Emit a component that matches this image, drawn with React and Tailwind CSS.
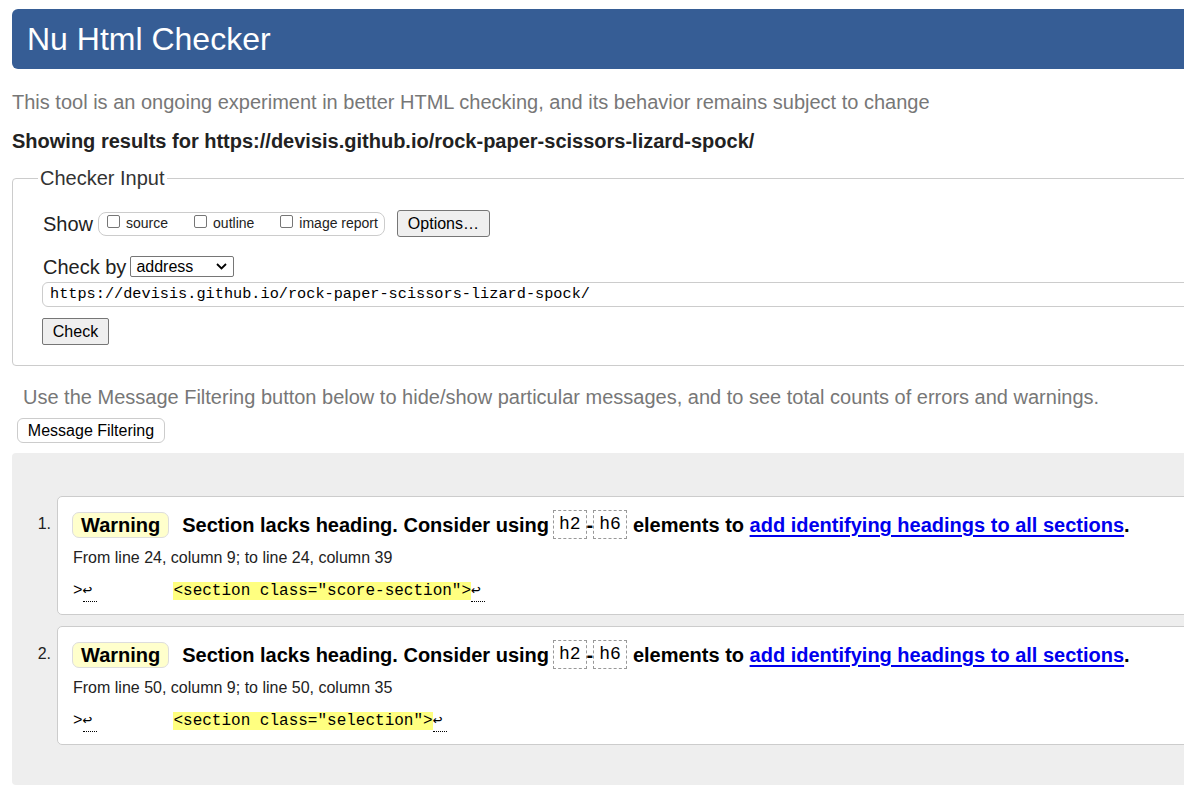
import React from 'react';

const SANS = 'font-["Liberation_Sans",Arial,sans-serif]';
const MONO = 'font-["Liberation_Mono","DejaVu_Sans_Mono",monospace]';

const messages = [
  { n: 1, from: 'From line 24, column 9; to line 24, column 39', code: '<section class="score-section">' },
  { n: 2, from: 'From line 50, column 9; to line 50, column 35', code: '<section class="selection">' },
];

function Box() {
  return <span className="inline-block w-[13px] h-[13px] border border-[#767676] rounded-[2px] bg-white mr-[6px] translate-y-[-2px]"></span>;
}

function Tag({ children }) {
  return (
    <code className={`${MONO} inline-flex items-center h-[29px] px-[5px] border border-dashed border-[#999] font-normal text-[18px]`}>
      {children}
    </code>
  );
}

function Message({ m }) {
  return (
    <li className="flex">
      <span className="w-[45px] shrink-0 text-right pr-[6px] pt-[15px] text-[16px] leading-[26px] text-[#222]">{m.n}.</span>
      <div className="w-[1200px] bg-white border border-[#ccc] rounded-[5px] pl-[15px] pt-[13px] pb-[12px]">
        <div className="flex items-center h-[29px] text-[20px] font-bold text-black whitespace-nowrap">
          <span className="inline-flex items-center h-[26px] px-[8px] bg-[#ffffcc] border border-[#ddd] rounded-[7px] mr-[13px] -ml-[1px]">Warning</span>
          <span className="mr-[4px]">Section lacks heading. Consider using</span>
          <Tag>h2</Tag>
          <span>-</span>
          <Tag>h6</Tag>
          <span className="ml-[6px]">elements to&nbsp;</span>
          <a className="text-[#0000ee] underline underline-offset-[3px]" href="#">add identifying headings to all sections</a>
          <span>.</span>
        </div>
        <p className="mt-[9px] text-[16px] leading-[20px] text-[#222]">{m.from}</p>
        <p className={`${MONO} mt-[13px] text-[16px] leading-[21px] text-black whitespace-pre`}>
          <span>&gt;</span>
          <span className="inline-block w-[14px] border-b border-dotted border-black leading-[19px]">↩</span>
          <span>{'        '}</span>
          <span className="bg-[#ffff80]">{m.code}</span>
          <span className="inline-block w-[14px] border-b border-dotted border-black leading-[19px]">↩</span>
        </p>
      </div>
    </li>
  );
}

export default function App() {
  return (
    <div className={`${SANS} w-full h-[796px] overflow-hidden bg-white text-[#222]`}>
      <div className="w-[1400px] pl-[12px]">
        <header className="mt-[9px] h-[60px] bg-[#365d95] rounded-[6px] pl-[15px] flex items-center">
          <h1 className="text-[32px] text-white leading-none">Nu Html Checker</h1>
        </header>

        <p className="mt-[22px] text-[20px] leading-[23px] text-[#777]">
          This tool is an ongoing experiment in better HTML checking, and its behavior remains subject to change
        </p>
        <p className="mt-[16px] text-[20px] leading-[23px] font-bold text-[#222]">
          Showing results for https://devisis.github.io/rock-paper-scissors-lizard-spock/
        </p>

        <fieldset className="mt-[14px] border border-[#ccc] rounded-[4px] pl-[30px] pb-[20px]">
          <legend className="-ml-[5px] px-[2px] text-[20px] leading-[23px] text-[#333]">Checker Input</legend>

          <div className="mt-[20px] flex items-center h-[27px]">
            <span className="text-[20px] text-[#222]">Show</span>
            <div className="ml-[5px] flex items-center h-[24px] border border-[#ccc] rounded-[8px] pl-[8px] pr-[6px] text-[14px] text-[#222]">
              <label className="flex items-center mr-[26px]"><Box />source</label>
              <label className="flex items-center mr-[26px]"><Box />outline</label>
              <label className="flex items-center"><Box />image report</label>
            </div>
            <button className="ml-[12px] h-[27px] w-[93px] bg-[#efefef] border border-[#767676] rounded-[3px] text-[16px] text-black">Options…</button>
          </div>

          <div className="mt-[18px] flex items-center h-[23px]">
            <span className="text-[20px] text-[#222]">Check by</span>
            <div className="ml-[4px] w-[104px] h-[21px] border border-[#767676] rounded-[2px] flex items-center justify-between pl-[5px] pr-[6px] text-[16px] text-black">
              <span>address</span>
              <svg width="11" height="7" viewBox="0 0 11 7"><path d="M1 1l4.5 4.5L10 1" stroke="#000" strokeWidth="1.8" fill="none" /></svg>
            </div>
          </div>

          <div className={`${MONO} -ml-[1px] mt-[4px] w-[1340px] h-[25px] border border-[#ccc] rounded-[6px] flex items-center pl-[7px] text-[15.25px] text-black`}>
            https://devisis.github.io/rock-paper-scissors-lizard-spock/
          </div>

          <button className="-ml-[1px] mt-[11px] w-[67px] h-[27px] bg-[#efefef] border border-[#767676] rounded-[2px] text-[16px] text-black">Check</button>
        </fieldset>

        <p className="mt-[20px] pl-[11px] text-[20px] leading-[23px] text-[#777]">
          Use the Message Filtering button below to hide/show particular messages, and to see total counts of errors and warnings.
        </p>
        <button className="ml-[5px] mt-[9px] w-[148px] h-[25px] bg-white border border-[#ccc] rounded-[6px] text-[16px] text-black">Message Filtering</button>

        <div className="mt-[10px] h-[332px] bg-[#eee] rounded-[4px] pt-[43px]">
          <ol className="flex flex-col gap-[11px]">
            {messages.map((m) => <Message key={m.n} m={m} />)}
          </ol>
        </div>
      </div>
    </div>
  );
}
